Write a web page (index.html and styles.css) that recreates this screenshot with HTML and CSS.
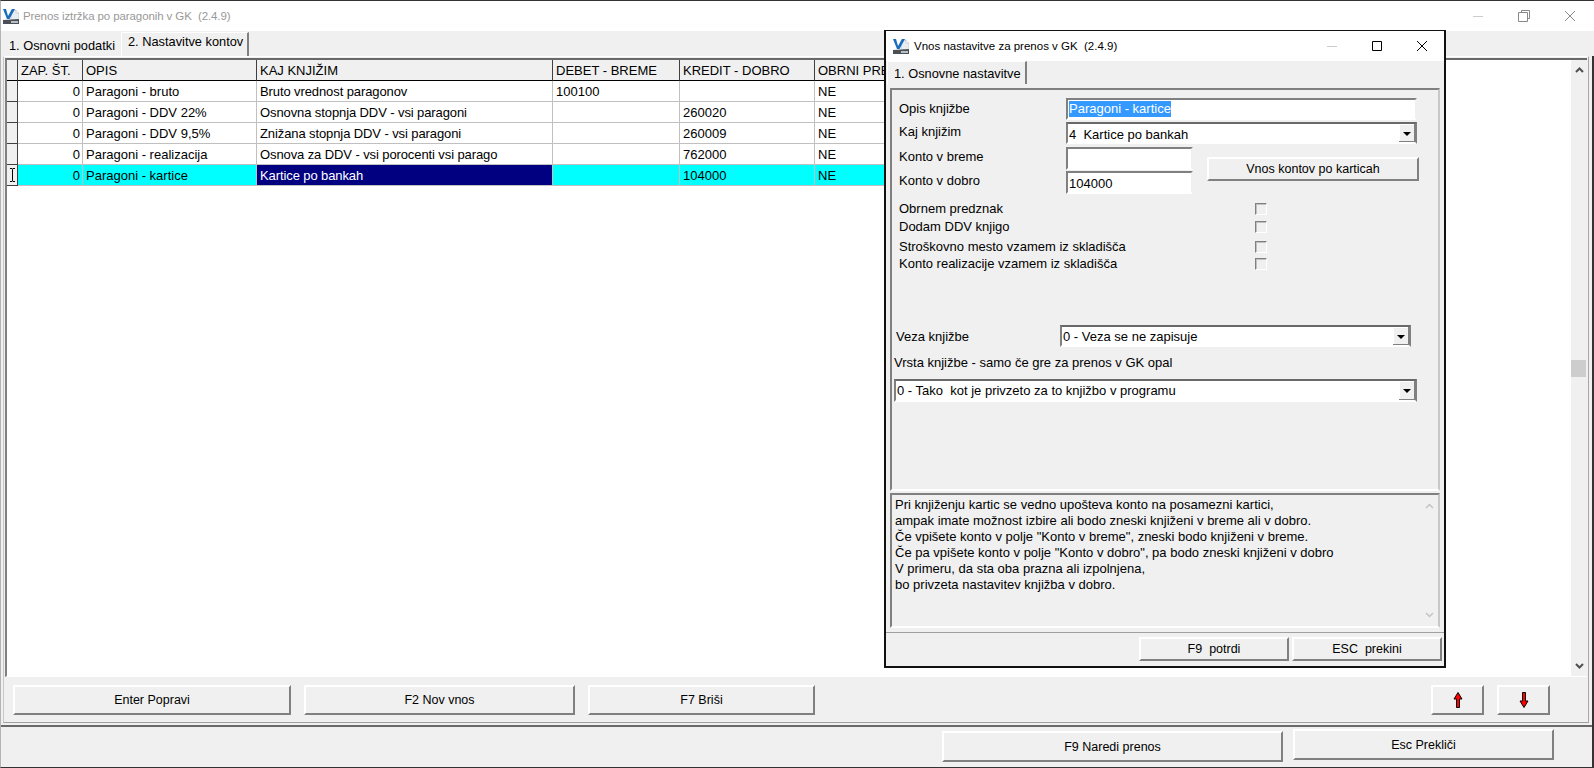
FILE: index.html
```html
<!DOCTYPE html>
<html lang="sl">
    <head>
        <meta charset="UTF-8" />
        <title>Prenos iztržka po paragonih v GK</title>
        <link rel="stylesheet" href="styles.css">
    </head>
    <body>
        <svg class="svg-defs" width="0" height="0">
            <symbol id="app-icon" viewBox="0 0 16 16">
                <path d="M8 2h5l3 3v7H8z" fill="#e8edf2" stroke="#a8b2ba" stroke-width=".5"/>
                <path d="M13 2v3h3" fill="#fff" stroke="#a8b2ba" stroke-width=".5"/>
                <path d="M0 1h3l2 7 4-7h3L6.500 11H4z" fill="#1a6cbc"/>
                <path d="M0 12l16-1v5H0z" fill="#4a5056"/>
                <path d="M8 13h7v2H8z" fill="#b8c0c6"/>
            </symbol>
        </svg>

        <div class="app">
            <div class="titlebar titlebar-off">
                <svg class="app-icon"><use href="#app-icon"/></svg>
                <span class="title-text">Prenos iztržka po paragonih v GK&nbsp; (2.4.9)</span>
                <div class="win-btns">
                    <span class="win-btn"><svg width="12" height="12"><path d="M1 6.500h10" stroke="#ccc"/></svg></span>
                    <span class="win-btn"><svg width="12" height="12" fill="none" stroke="#888"><path d="M3.500 2.500V.500h8v8h-2"/><path d="M.500 2.500h9v9h-9z"/></svg></span>
                    <span class="win-btn"><svg width="12" height="12" fill="none" stroke="#888"><path d="M1 1l10 10M11 1L1 11"/></svg></span>
                </div>
            </div>

            <ul class="tabs">
                <li class="tab tab-first">1. Osnovni podatki</li>
                <li class="tab tab-active tab-second">2. Nastavitve kontov</li>
            </ul>

            <div class="page">
                <div class="grid-area">
                    <div class="grid-clip">
                        <table class="grid">
                            <colgroup>
                                <col class="c-ind">
                                <col class="c-nr">
                                <col class="c-opis">
                                <col class="c-kaj">
                                <col class="c-debet">
                                <col class="c-kredit">
                                <col class="c-obrni">
                            </colgroup>
                            <thead>
                                <tr>
                                    <th></th>
                                    <th>ZAP. ŠT.</th>
                                    <th>OPIS</th>
                                    <th>KAJ KNJIŽIM</th>
                                    <th>DEBET - BREME</th>
                                    <th>KREDIT - DOBRO</th>
                                    <th>OBRNI PRE</th>
                                </tr>
                            </thead>
                            <tbody>
                                <tr>
                                    <td class="ind"></td>
                                    <td class="num">0</td>
                                    <td>Paragoni - bruto</td>
                                    <td class="kaj">Bruto vrednost paragonov</td>
                                    <td>100100</td>
                                    <td></td>
                                    <td>NE</td>
                                </tr>
                                <tr>
                                    <td class="ind"></td>
                                    <td class="num">0</td>
                                    <td>Paragoni - DDV 22%</td>
                                    <td class="kaj">Osnovna stopnja DDV - vsi paragoni</td>
                                    <td></td>
                                    <td>260020</td>
                                    <td>NE</td>
                                </tr>
                                <tr>
                                    <td class="ind"></td>
                                    <td class="num">0</td>
                                    <td>Paragoni - DDV 9,5%</td>
                                    <td class="kaj">Znižana stopnja DDV - vsi paragoni</td>
                                    <td></td>
                                    <td>260009</td>
                                    <td>NE</td>
                                </tr>
                                <tr>
                                    <td class="ind"></td>
                                    <td class="num">0</td>
                                    <td>Paragoni - realizacija</td>
                                    <td class="kaj">Osnova za DDV - vsi porocenti vsi parago</td>
                                    <td></td>
                                    <td>762000</td>
                                    <td>NE</td>
                                </tr>
                                <tr class="row-current">
                                    <td class="ind">
                                        <svg class="ibeam" width="7" height="14" fill="none" stroke="#000"><path d="M1 .500h2l.500 1 .500-1h2M3.500 1.500v11M1 13.500h2l.500-1 .500 1h2"/></svg>
                                    </td>
                                    <td class="num">0</td>
                                    <td>Paragoni - kartice</td>
                                    <td class="kaj cell-focus">Kartice po bankah</td>
                                    <td></td>
                                    <td>104000</td>
                                    <td>NE</td>
                                </tr>
                            </tbody>
                        </table>
                    </div>
                    <div class="scrollbar">
                        <svg class="chev" width="9" height="6" fill="none" stroke="#505050" stroke-width="2"><path d="M1 5l3.500-3.500L8 5"/></svg>
                        <div class="scroll-thumb"></div>
                        <svg class="chev" width="9" height="6" fill="none" stroke="#505050" stroke-width="2"><path d="M1 1l3.500 3.500L8 1"/></svg>
                    </div>
                </div>

                <div class="toolbar">
                    <button class="btn btn-popravi" type="button">Enter Popravi</button>
                    <button class="btn btn-nov" type="button">F2 Nov vnos</button>
                    <button class="btn btn-brisi" type="button">F7 Briši</button>
                    <button class="btn btn-arrow btn-up" type="button">
                        <svg width="10" height="16"><path d="M5 .500L9 7H6.500v8.500h-3V7H1z" fill="#f00" stroke="#000"/></svg>
                    </button>
                    <button class="btn btn-arrow" type="button">
                        <svg width="10" height="16"><path d="M5 15.500L9 9H6.500V.500h-3V9H1z" fill="#f00" stroke="#000"/></svg>
                    </button>
                </div>
            </div>

            <div class="footer">
                <button class="btn btn-naredi" type="button">F9 Naredi prenos</button>
                <button class="btn btn-preklici" type="button">Esc Prekliči</button>
            </div>
        </div>

        <div class="dialog">
            <div class="titlebar dialog-title">
                <svg class="app-icon"><use href="#app-icon"/></svg>
                <span class="title-text">Vnos nastavitve za prenos v GK&nbsp; (2.4.9)</span>
                <div class="win-btns">
                    <span class="win-btn"><svg width="12" height="12"><path d="M1 6.500h10" stroke="#ccc"/></svg></span>
                    <span class="win-btn"><svg width="12" height="12" fill="none" stroke="#000"><path d="M1.500 1.500h9v9h-9z"/></svg></span>
                    <span class="win-btn"><svg width="12" height="12" fill="none" stroke="#000"><path d="M1 1l10 10M11 1L1 11"/></svg></span>
                </div>
            </div>

            <ul class="tabs dialog-tabs">
                <li class="tab tab-active">1. Osnovne nastavitve</li>
            </ul>

            <div class="form">
                <div class="form-row row-opis">
                    <label class="form-label">Opis knjižbe</label>
                    <div class="field field-wide"><span class="selected-text">Paragoni - kartice</span></div>
                </div>
                <div class="form-row row-kaj">
                    <label class="form-label">Kaj knjižim</label>
                    <div class="field field-wide combo">
                        <span class="combo-value">4&nbsp; Kartice po bankah</span>
                        <span class="combo-btn"></span>
                    </div>
                </div>
                <div class="konto-block">
                    <div class="konto-fields">
                        <div class="form-row">
                            <label class="form-label">Konto v breme</label>
                            <div class="field field-konto"></div>
                        </div>
                        <div class="form-row row-dobro">
                            <label class="form-label">Konto v dobro</label>
                            <div class="field field-konto">104000</div>
                        </div>
                    </div>
                    <button class="btn btn-kartice" type="button">Vnos kontov po karticah</button>
                </div>

                <div class="check-list">
                    <div class="check-row check-first"><span>Obrnem predznak</span><i class="check"></i></div>
                    <div class="check-row"><span>Dodam DDV knjigo</span><i class="check"></i></div>
                    <div class="check-row check-gap"><span>Stroškovno mesto vzamem iz skladišča</span><i class="check"></i></div>
                    <div class="check-row"><span>Konto realizacije vzamem iz skladišča</span><i class="check"></i></div>
                </div>

                <div class="form-row row-veza">
                    <label class="veza-label">Veza knjižbe</label>
                    <div class="field field-veza combo">
                        <span class="combo-value">0 - Veza se ne zapisuje</span>
                        <span class="combo-btn"></span>
                    </div>
                </div>
                <div class="vrsta-label">Vrsta knjižbe - samo če gre za prenos v GK opal</div>
                <div class="field field-vrsta combo">
                    <span class="combo-value">0 - Tako&nbsp; kot je privzeto za to knjižbo v programu</span>
                    <span class="combo-btn"></span>
                </div>
            </div>

            <div class="memo">
                <div class="memo-text">
                    Pri knjiženju kartic se vedno upošteva konto na posamezni kartici,<br>
                    ampak imate možnost izbire ali bodo zneski knjiženi v breme ali v dobro.<br>
                    Če vpišete konto v polje "Konto v breme", zneski bodo knjiženi v breme.<br>
                    Če pa vpišete konto v polje "Konto v dobro", pa bodo zneski knjiženi v dobro<br>
                    V primeru, da sta oba prazna ali izpolnjena,<br>
                    bo privzeta nastavitev knjižba v dobro.
                </div>
                <div class="memo-scroll">
                    <svg width="9" height="6" fill="none" stroke="#c4c4c4" stroke-width="1.500"><path d="M1 5l3.500-3.500L8 5"/></svg>
                    <svg width="9" height="6" fill="none" stroke="#c4c4c4" stroke-width="1.500"><path d="M1 1l3.500 3.500L8 1"/></svg>
                </div>
            </div>

            <div class="dialog-footer">
                <button class="btn btn-potrdi" type="button">F9&nbsp; potrdi</button>
                <button class="btn btn-prekini" type="button">ESC&nbsp; prekini</button>
            </div>
        </div>
    </body>
</html>
```

FILE: styles.css
```css
html,
body,
ul,
li {
    padding: 0;
    margin: 0;
}
ul,
li {
    list-style: none;
}
html,
body {
    height: 100%;
    overflow: hidden;
}
body {
    position: relative;
    font-family: "Liberation Sans", Arial, sans-serif;
    font-size: 13px;
    color: #000;
    background-color: #f0f0f0;
}
.svg-defs {
    position: absolute;
}

/* main window */
.app {
    display: flex;
    flex-flow: column;
    box-sizing: border-box;
    height: 768px;
    border: 1px solid #333;
    border-width: 1px 2px 1px 1px;
    border-left-color: #b4b4b4;
}
/* the dark right edge only starts below the tab strip */
.app > .titlebar,
.app > .tabs {
    position: relative;
    margin-right: -2px;
}

.titlebar {
    display: flex;
    align-items: center;
    flex: none;
    height: 30px;
    background-color: #fff;
}
.app > .titlebar .win-btns {
    padding-right: 1px;
}
.app-icon {
    flex: none;
    width: 16px;
    height: 16px;
    margin-left: 2px;
}
.title-text {
    margin-left: 4px;
    font-size: 11.5px;
}
.titlebar-off .title-text {
    color: #999;
    letter-spacing: -0.1px;
}
.win-btns {
    display: flex;
    margin-left: auto;
}
.win-btn {
    display: flex;
    justify-content: center;
    align-items: center;
    width: 46px;
    height: 30px;
}

.tabs {
    display: flex;
    flex: none;
    height: 25px;
    padding-left: 2px;
    align-items: flex-end;
    font-size: 12.8px;
    background-color: #f0f0f0;
}
.tab {
    height: 21px;
    line-height: 22px;
    padding: 0 6px;
    box-sizing: border-box;
    white-space: nowrap;
}
.tab-first {
    width: 118px;
}
.tab-active {
    height: 24px;
    line-height: 18px;
    padding: 0 6px;
    border-top: 1px solid #fff;
    border-left: 1px solid #fff;
    border-right: 2px solid #808080;
}
.tab-second {
    width: 128px;
}

.page {
    display: flex;
    flex-flow: column;
    flex: 1;
    min-height: 0;
    margin: 0 3px 2px 2px;
    box-sizing: border-box;
    border: 1px solid #a8a8a8;
    border-top: 1px solid #fff;
    border-left-color: #c8c8c8;
    border-bottom: 1px solid #a0a0a0;
}
.grid-area {
    display: flex;
    flex: 1;
    min-height: 0;
    margin: 1px 1px 0 1px;
    border-top: 2px solid #696969;
    border-left: 2px solid #808080;
    border-bottom: 1px solid #fff;
    background-color: #fff;
}
.grid-clip {
    flex: 1;
    overflow: hidden;
}

/* grid */
.grid {
    table-layout: fixed;
    border-collapse: separate;
    border-spacing: 0;
    width: 933px;
}
.c-ind { width: 11px; }
.c-nr { width: 65px; }
.c-opis { width: 174px; }
.c-kaj { width: 296px; }
.c-debet { width: 127px; }
.c-kredit { width: 135px; }
.c-obrni { width: 125px; }

.grid th {
    height: 20px;
    padding: 0 0 0 3px;
    box-sizing: content-box;
    font-weight: normal;
    text-align: left;
    white-space: nowrap;
    overflow: hidden;
    background-color: #f0f0f0;
    border-right: 1px solid #404040;
    border-bottom: 1px solid #000;
}
.grid td {
    height: 20px;
    padding: 0 0 0 3px;
    white-space: nowrap;
    overflow: hidden;
    border-right: 1px solid #c0c0c0;
    border-bottom: 1px solid #c0c0c0;
}
.grid td.kaj {
    letter-spacing: -0.1px;
}
.grid td.ind {
    padding: 0;
    background-color: #f0f0f0;
    border-right: 1px solid #404040;
    border-bottom: 1px solid #404040;
}
.grid td.num {
    padding: 0 2px 0 0;
    text-align: right;
}
.row-current td {
    background-color: #0ff;
}
.grid .row-current td.cell-focus {
    background-color: #000080;
    color: #fff;
}
.ibeam {
    display: block;
    margin: 0 auto;
}

.scrollbar {
    display: flex;
    flex-flow: column;
    align-items: center;
    justify-content: space-between;
    flex: none;
    width: 16px;
    padding: 7px 0;
    box-sizing: border-box;
    background-color: #f0f0f0;
    position: relative;
}
.scroll-thumb {
    position: absolute;
    top: 300px;
    left: 0;
    width: 15px;
    height: 17px;
    background-color: #cdcdcd;
}

/* buttons */
.btn {
    padding: 0;
    box-sizing: border-box;
    font-family: inherit;
    font-size: 12.5px;
    color: #000;
    background-color: #f0f0f0;
    border: 2px solid;
    border-color: #fff #808080 #808080 #fff;
    outline: none;
}
.toolbar {
    display: flex;
    flex: none;
    height: 45px;
    padding: 8px 0 0 9px;
    box-sizing: border-box;
}
.toolbar .btn {
    height: 30px;
}
.btn-popravi { width: 278px; }
.btn-nov { width: 271px; margin-left: 13px; }
.btn-brisi { width: 227px; margin-left: 13px; }
.btn-arrow {
    display: flex;
    justify-content: center;
    align-items: center;
    width: 53px;
    margin-left: 13px;
}
.btn-up {
    margin-left: auto;
}
.toolbar .btn-arrow:last-child {
    margin-right: 38px;
}

.footer {
    display: flex;
    flex: none;
    justify-content: flex-end;
    height: 42px;
    padding-right: 38px;
    box-sizing: border-box;
    border-top: 2px solid #696969;
}
.btn-naredi {
    width: 341px;
    height: 31px;
    margin-top: 4px;
}
.btn-preklici {
    width: 261px;
    height: 31px;
    margin: 2px 0 0 10px;
}

/* dialog window over the main one */
.dialog {
    position: absolute;
    top: 30px;
    left: 884px;
    display: flex;
    flex-flow: column;
    box-sizing: border-box;
    width: 562px;
    height: 638px;
    background-color: #f0f0f0;
    border: 2px solid #111;
    border-width: 1px 2px 2px 2px;
}
.dialog-title {
    height: 30px;
}
.dialog-title .app-icon {
    margin-left: 7px;
}
.dialog-title .title-text {
    margin-left: 5px;
}
.dialog-title .win-btn {
    width: 44px;
}
.dialog-title .win-btn:nth-child(2) {
    width: 46px;
}
.dialog-tabs {
    height: 27px;
    padding-left: 1px;
    align-items: flex-start;
    background: none;
}
.dialog-tabs .tab-active {
    height: 23px;
    line-height: 23px;
    width: 140px;
}

.form {
    flex: none;
    height: 403px;
    margin-left: 4px;
    margin-right: 4px;
    padding: 8px 0 0 0;
    box-sizing: border-box;
    border: 2px solid;
    border-color: #808080 #c8c8c8 #fff #808080;
}
.form-row {
    display: flex;
    align-items: center;
}
.form-label {
    width: 167px;
    margin-left: 7px;
    padding-bottom: 4px;
    flex: none;
}
.row-opis .form-label {
    padding-bottom: 2px;
}
.field {
    display: flex;
    align-items: center;
    box-sizing: border-box;
    height: 22px;
    padding-left: 1px;
    background-color: #fff;
    white-space: nowrap;
    border: 2px solid;
    border-color: #808080 #f0f0f0 #fff #808080;
}
.field-wide {
    width: 351px;
}
.row-kaj {
    margin-top: 2px;
}
.row-kaj .combo-value {
    padding-top: 2px;
}
.field-konto {
    padding-top: 1px;
}
.selected-text {
    color: #fff;
    background-color: #3399ff;
    line-height: 16px;
}
.combo {
    padding-right: 0;
    border-color: #696969 #808080 #fff #808080;
}
.combo-value {
    flex: 1;
    overflow: hidden;
}
.combo-btn {
    position: relative;
    flex: none;
    width: 16px;
    height: 100%;
    background-color: #f0f0f0;
    box-shadow: inset -1px -1px 0 #808080, inset 1px 1px 0 #fff;
}
.combo-btn::after {
    content: "";
    position: absolute;
    top: 8px;
    left: 4px;
    border: 4px solid transparent;
    border-top: 4px solid #000;
    border-bottom: 0;
}

.konto-block {
    display: flex;
    margin-top: 3px;
}
.konto-fields {
    flex: none;
}
.field-konto {
    width: 127px;
    height: 23px;
}
.row-dobro {
    margin-top: 1px;
}
.btn-kartice {
    width: 212px;
    height: 24px;
    margin: 10px 0 0 14px;
}

.check-list {
    margin-top: 6px;
}
.check-row {
    display: flex;
    align-items: center;
    height: 17px;
    margin-left: 7px;
}
.check-row > span {
    width: 356px;
    flex: none;
}
.check-first {
    margin-bottom: 1px;
}
.check-gap {
    margin-top: 3px;
}
.check {
    display: block;
    box-sizing: border-box;
    width: 12px;
    height: 12px;
    background-color: #f0f0f0;
    border: 1px solid;
    border-color: #808080 #fff #fff #808080;
    box-shadow: inset 1px 1px 0 #c0c0c0;
}

.row-veza {
    margin-top: 53px;
}
.veza-label {
    width: 164px;
    margin-left: 4px;
    flex: none;
}
.field-veza {
    width: 351px;
}
.vrsta-label {
    margin: 8px 0 0 2px;
    height: 18px;
    line-height: 16px;
}
.field-vrsta {
    width: 523px;
    height: 23px;
    margin: 6px 0 0 2px;
}

.memo {
    display: flex;
    flex: none;
    box-sizing: border-box;
    height: 135px;
    margin: 2px 4px 0 4px;
    border: 2px solid;
    border-color: #808080 #c8c8c8 #fff #808080;
}
.memo-text {
    flex: 1;
    padding: 2px 0 0 3px;
    line-height: 16px;
    white-space: nowrap;
}
.memo-scroll {
    display: flex;
    flex-flow: column;
    justify-content: space-between;
    align-items: center;
    flex: none;
    width: 17px;
    padding: 8px 0;
    box-sizing: border-box;
}

.dialog-footer {
    display: flex;
    flex: none;
    justify-content: flex-end;
    margin-top: 4px;
    padding: 4px 2px 0 0;
    border-top: 1px solid #a0a0a0;
}
.btn-potrdi {
    width: 150px;
    height: 24px;
}
.btn-prekini {
    width: 150px;
    height: 24px;
    margin-left: 3px;
}
```
